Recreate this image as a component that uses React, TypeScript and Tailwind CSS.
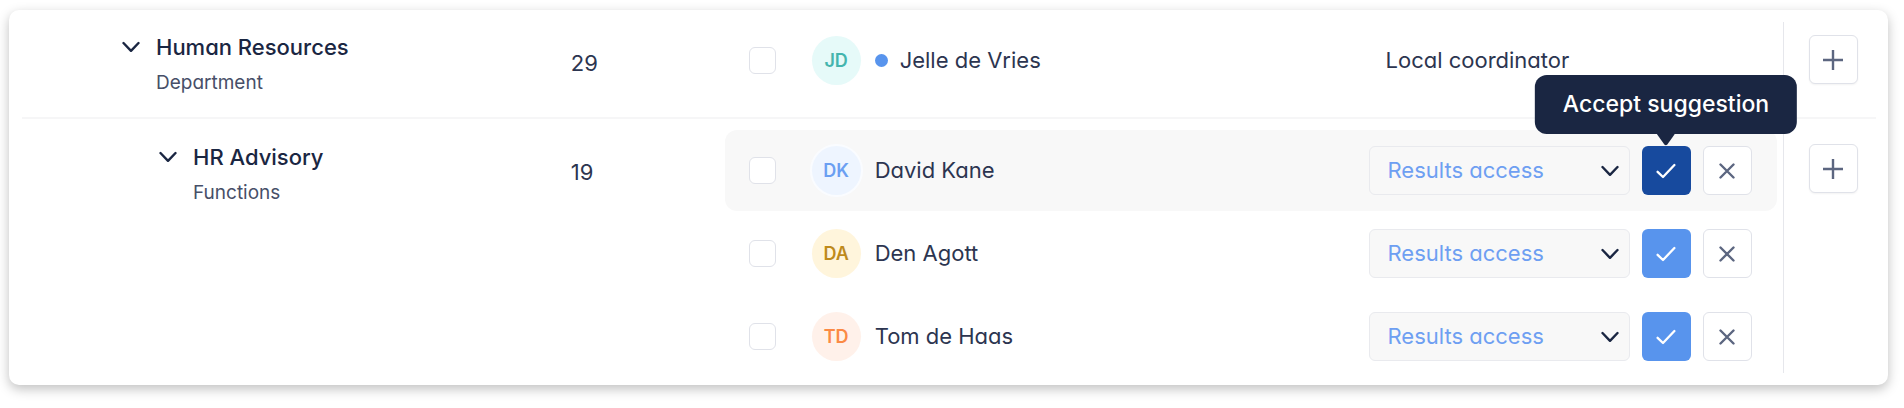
import { useState } from "react";
import clsx from "clsx";

type Member = {
  initials: string;
  name: string;
  avatar: string;
  role?: string;
  active?: boolean;
  hovered?: boolean;
};

type Unit = {
  name: string;
  kind: string;
  count: number;
  nested?: boolean;
  members: Member[];
};

const units: Unit[] = [
  {
    name: "Human Resources",
    kind: "Department",
    count: 29,
    members: [
      {
        initials: "JD",
        name: "Jelle de Vries",
        avatar: "bg-[#e6faf9] text-[#45b5ae]",
        role: "Local coordinator",
        active: true,
      },
    ],
  },
  {
    name: "HR Advisory",
    kind: "Functions",
    count: 19,
    nested: true,
    members: [
      {
        initials: "DK",
        name: "David Kane",
        avatar: "bg-[#eef5ff] text-[#6b9ff2] ring-2 ring-[#fafcff]",
        hovered: true,
      },
      { initials: "DA", name: "Den Agott", avatar: "bg-[#fff5dc] text-[#be8a1c]" },
      { initials: "TD", name: "Tom de Haas", avatar: "bg-[#fff1ea] text-[#fb8a45]" },
    ],
  },
];

const ChevronIcon = ({ className }: { className?: string }) => (
  <svg
    viewBox="0 0 18 12"
    fill="none"
    stroke="currentColor"
    strokeWidth="2.4"
    strokeLinecap="round"
    strokeLinejoin="round"
    className={clsx("h-3 w-[18px] text-[#1a2642]", className)}
    aria-hidden="true"
  >
    <path d="M1.5 2 9 9.8 16.5 2" />
  </svg>
);

const CheckIcon = () => (
  <svg
    viewBox="0 0 20 16"
    fill="none"
    stroke="currentColor"
    strokeWidth="2.3"
    strokeLinecap="round"
    strokeLinejoin="round"
    className="h-4 w-5"
    aria-hidden="true"
  >
    <path d="M1.6 8.8 7 14 18.4 2" />
  </svg>
);

const CrossIcon = () => (
  <svg
    viewBox="0 0 16 16"
    fill="none"
    stroke="currentColor"
    strokeWidth="2.4"
    strokeLinecap="round"
    className="size-4"
    aria-hidden="true"
  >
    <path d="M1.5 1.5 14.5 14.5M14.5 1.5 1.5 14.5" />
  </svg>
);

const PlusIcon = () => (
  <svg
    viewBox="0 0 20 20"
    fill="none"
    stroke="currentColor"
    strokeWidth="2.4"
    className="size-5"
    aria-hidden="true"
  >
    <path d="M10 0V20M0 10H20" />
  </svg>
);

const iconButton = "flex size-[49px] shrink-0 items-center justify-center rounded-md";

const MemberRow = ({ member }: { member: Member }) => {
  const [access, setAccess] = useState("Results access");

  return (
    <li
      className={clsx(
        "mr-1.5 flex items-center rounded-xl pr-[25px] pl-6",
        member.hovered && "-my-4 bg-[#f8f8f8] py-4"
      )}
    >
      <input
        type="checkbox"
        aria-label={`Select ${member.name}`}
        className="size-[27px] shrink-0 appearance-none rounded-md border border-[#e0e2e9] bg-white checked:bg-[#5894ed]"
      />
      <span
        className={clsx(
          "ml-9 flex size-[49px] shrink-0 items-center justify-center rounded-full text-lg font-semibold",
          member.avatar
        )}
      >
        {member.initials}
      </span>
      {member.active && <span className="ml-3.5 size-[13px] shrink-0 rounded-full bg-[#5894ed]" />}
      <span className={clsx("grow", member.active ? "ml-3" : "ml-3.5")}>{member.name}</span>

      {member.role ? (
        <span className="w-[366px] shrink-0">{member.role}</span>
      ) : (
        <div className="flex shrink-0 items-center gap-3">
          <div className="relative">
            <select
              value={access}
              onChange={(e) => setAccess(e.target.value)}
              aria-label={`Access for ${member.name}`}
              className="h-[49px] w-[261px] appearance-none rounded-md border border-[#e9eaee] bg-[#f8f8f8] pr-12 pl-[18px] text-[#6e9ff2]"
            >
              <option>Results access</option>
              <option>Local coordinator</option>
            </select>
            <ChevronIcon className="pointer-events-none absolute top-[19px] right-[11px]" />
          </div>
          <div className="relative">
            <button
              aria-label={`Accept suggestion for ${member.name}`}
              className={clsx(iconButton, "text-white", member.hovered ? "bg-[#174a9e]" : "bg-[#5894ed]")}
            >
              <CheckIcon />
            </button>
            {member.hovered && (
              <div
                role="tooltip"
                className="absolute bottom-full left-1/2 mb-3 -translate-x-1/2 rounded-xl bg-[#1a2642] px-7 py-3.5 text-[23px] leading-[31px] font-medium whitespace-nowrap text-white"
              >
                Accept suggestion
                <svg
                  viewBox="0 0 18 12"
                  className="absolute top-full left-1/2 h-3 w-[18px] -translate-x-1/2 text-[#1a2642]"
                  aria-hidden="true"
                >
                  <path d="M0 0H18L10.5 10.5Q9 12 7.5 10.5Z" fill="currentColor" />
                </svg>
              </div>
            )}
          </div>
          <button
            aria-label={`Decline suggestion for ${member.name}`}
            className={clsx(iconButton, "border border-[#e0e2e9] bg-white text-[#5c6680]")}
          >
            <CrossIcon />
          </button>
        </div>
      )}
    </li>
  );
};

const UnitRow = ({ unit }: { unit: Unit }) => (
  <tr className={clsx("align-top", !unit.nested && "border-b-2 border-[#f6f6f7]")}>
    <td className={clsx(unit.nested ? "pt-[22px] pl-[137px]" : "pt-[9px] pl-[100px]")}>
      <div className="flex items-start gap-4">
        <button aria-label={`Collapse ${unit.name}`} className="flex h-8 w-[18px] items-center">
          <ChevronIcon />
        </button>
        <div>
          <div className="leading-8 font-medium text-[#1a2642]">{unit.name}</div>
          <div className="mt-1 text-[19px] leading-8 text-[#474f68]">{unit.kind}</div>
        </div>
      </div>
    </td>
    <td className={clsx("p-0 leading-8", unit.nested ? "pt-[37px]" : "pt-[25px]")}>{unit.count}</td>
    <td className={clsx("p-0", unit.nested ? "pt-[27px] pb-3" : "pt-3.5 pb-8")}>
      <ul className="flex flex-col gap-[34px]">
        {unit.members.map((member) => (
          <MemberRow key={member.name} member={member} />
        ))}
      </ul>
    </td>
    <td className={clsx("border-l border-[#e6e7ec] pl-[25px]", unit.nested ? "pt-[25px]" : "pt-[13px]")}>
      <button
        aria-label={`Add member to ${unit.name}`}
        className={clsx(iconButton, "border border-[#e0e2e9] bg-white text-[#5c6680] shadow-xs")}
      >
        <PlusIcon />
      </button>
    </td>
  </tr>
);

const App = () => {
  return (
    <main className="bg-white px-4 pt-2.5 pb-6 pl-[9px] font-['Inter','Liberation_Sans',sans-serif] text-[22px] text-[#2c3550] [font-feature-settings:'cv11']">
      <div className="rounded-[10px] bg-white p-3 pl-[13px] shadow-[0_4px_12px_rgba(0,0,0,0.25)]">
        <table className="w-full table-fixed border-collapse text-left">
          <colgroup>
            <col className="w-[29.6%]" />
            <col className="w-[8.3%]" />
            <col />
            <col className="w-[93px]" />
          </colgroup>
          <tbody>
            {units.map((unit) => (
              <UnitRow key={unit.name} unit={unit} />
            ))}
          </tbody>
        </table>
      </div>
    </main>
  );
};

export default App;
